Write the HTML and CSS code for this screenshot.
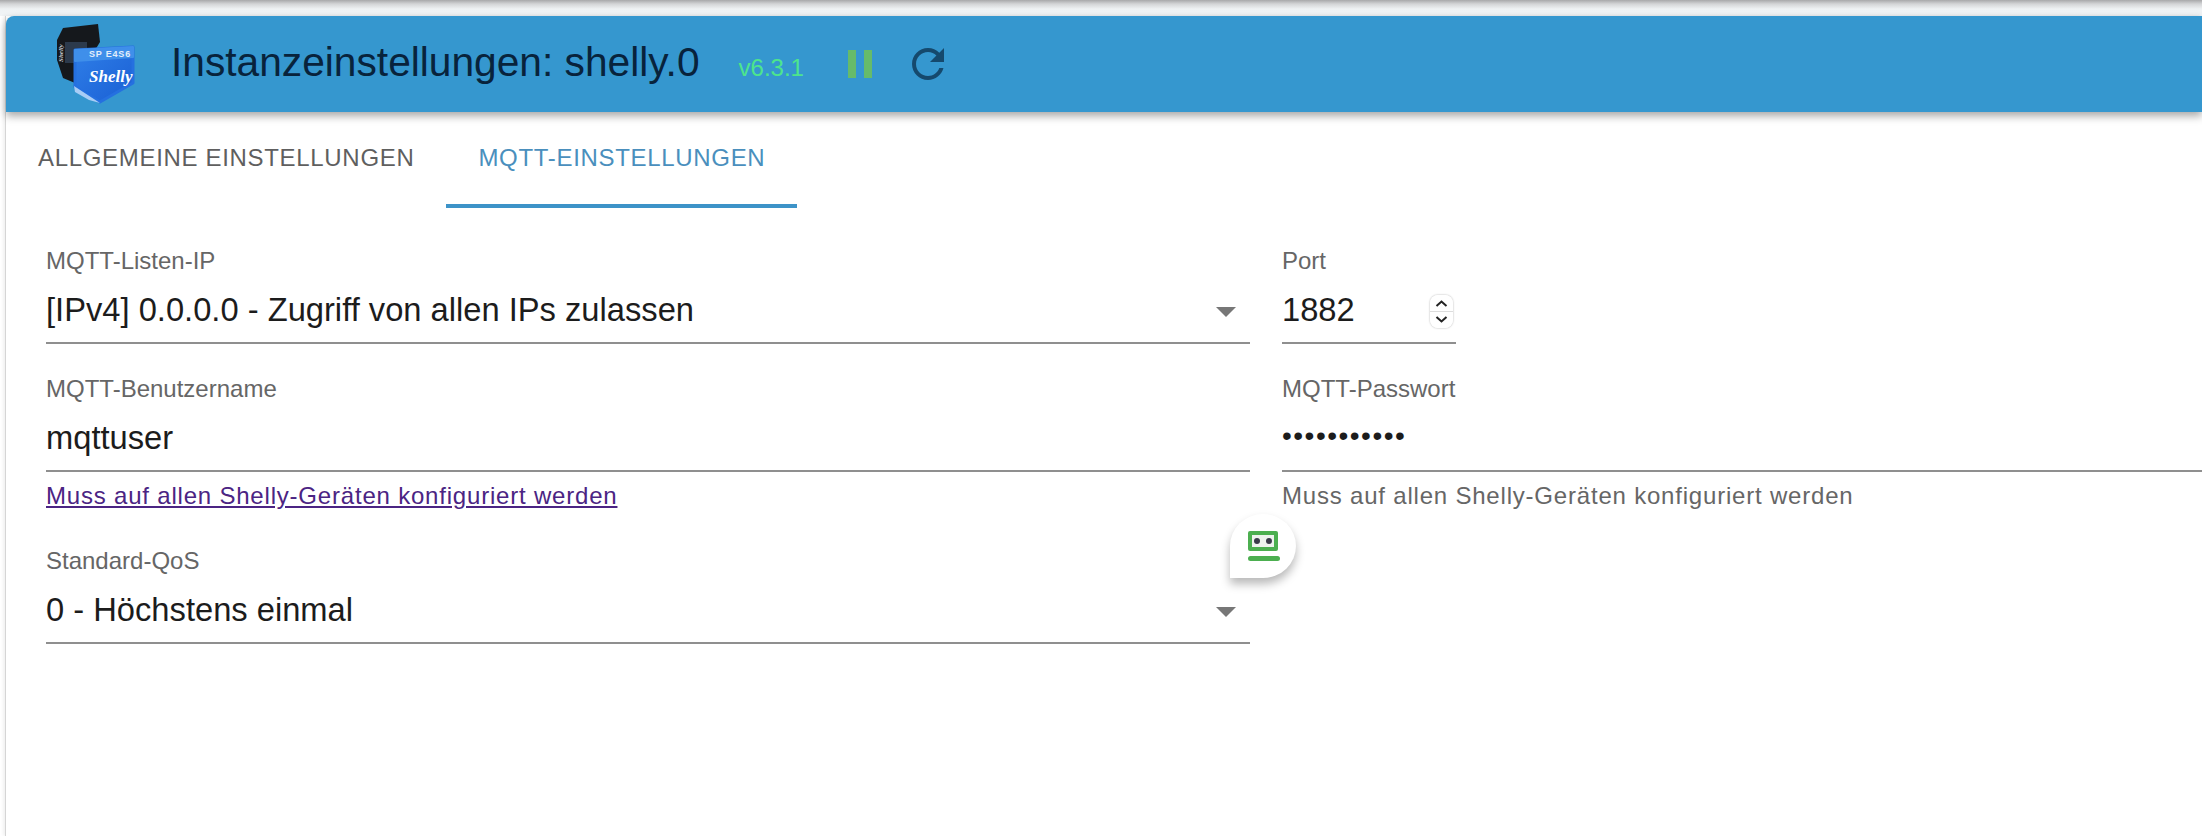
FILE: index.html
```html
<!DOCTYPE html>
<html lang="de">
<head>
    <meta charset="UTF-8">
    <meta name="viewport" content="width=device-width, initial-scale=1.0">
    <title>Instanzeinstellungen: shelly.0</title>
    <link rel="stylesheet" href="styles.css">
</head>
<body>
    <div class="top-strip"></div>
    <div class="card">
        <header class="app-bar">
            <svg class="logo" width="90" height="90" viewBox="0 0 90 90">
                <defs>
                    <linearGradient id="shellyFace" x1="0" y1="0" x2="1" y2="1">
                        <stop offset="0" stop-color="#2f7fe8"/>
                        <stop offset="1" stop-color="#1a5fd4"/>
                    </linearGradient>
                </defs>
                <path d="M6 20 L12 8 L47 4 L49 22 L24 63 L12 58 L6 40 Z" fill="#15181c"/>
                <rect x="14" y="22" width="22" height="21" fill="#2c3a4c"/>
                <text class="logo-side" transform="translate(12 42) rotate(-90)">Shelly</text>
                <path d="M24 30 L82 27 L82 63 L49 82 L24 67 Z" fill="url(#shellyFace)" stroke="#2570e0" stroke-width="3" stroke-linejoin="round"/>
                <path d="M24 30 L82 27 L82 37 L24 41 Z" fill="#3f8fea" stroke="#3f8fea" stroke-width="2" stroke-linejoin="round"/>
                <path d="M23 66 L49 83 L38 80 L24 72 Z" fill="#a9cdf6"/>
                <text class="logo-keys" x="38" y="37">SP E4S6</text>
                <text class="logo-name" x="38" y="62">Shelly</text>
            </svg>
            <h1 class="app-title">Instanzeinstellungen: shelly.0</h1>
            <span class="version">v6.3.1</span>
            <div class="pause"><span></span><span></span></div>
            <svg class="reload" width="48" height="48" viewBox="0 0 24 24">
                <path d="M17.65 6.35C16.2 4.9 14.21 4 12 4c-4.42 0-7.99 3.58-7.99 8s3.57 8 7.99 8c3.73 0 6.84-2.55 7.73-6h-2.08c-.82 2.33-3.04 4-5.65 4-3.31 0-6-2.69-6-6s2.69-6 6-6c1.66 0 3.14.69 4.22 1.78L13 11h7V4l-2.35 2.35z"/>
            </svg>
        </header>

        <nav class="tabs">
            <div class="tab">ALLGEMEINE EINSTELLUNGEN</div>
            <div class="tab tab-active">MQTT-EINSTELLUNGEN</div>
        </nav>

        <form class="form-grid">
            <div class="field">
                <label class="field-label">MQTT-Listen-IP</label>
                <div class="field-value">[IPv4] 0.0.0.0 - Zugriff von allen IPs zulassen<i class="arrow"></i></div>
            </div>
            <div class="field field-port">
                <label class="field-label">Port</label>
                <div class="field-value">1882
                    <div class="stepper">
                        <svg width="23" height="33" viewBox="0 0 23 33">
                            <path d="M6.5 11 L11.5 6.5 L16.5 11 M6.5 22 L11.5 26.5 L16.5 22" fill="none" stroke="#222" stroke-width="2"/>
                        </svg>
                    </div>
                </div>
            </div>

            <div class="field">
                <label class="field-label">MQTT-Benutzername</label>
                <div class="field-value">mqttuser</div>
                <a class="field-help help-link" href="#">Muss auf allen Shelly-Geräten konfiguriert werden</a>
            </div>
            <div class="field">
                <label class="field-label">MQTT-Passwort</label>
                <div class="field-value password">•••••••••••</div>
                <div class="field-help">Muss auf allen Shelly-Geräten konfiguriert werden</div>
            </div>

            <div class="field">
                <label class="field-label">Standard-QoS</label>
                <div class="field-value">0 - Höchstens einmal<i class="arrow"></i></div>
            </div>
        </form>
    </div>

    <div class="form-bubble">
        <svg width="34" height="34" viewBox="0 0 34 34">
            <rect x="2" y="2" width="30" height="20" rx="2" fill="#4caf50"/>
            <rect x="6" y="6" width="22" height="12" fill="#eef2ee"/>
            <circle cx="11" cy="12" r="3" fill="#3a3a4a"/>
            <circle cx="23" cy="12" r="3" fill="#3a3a4a"/>
            <rect x="2" y="27" width="32" height="5" rx="2.5" fill="#4caf50"/>
        </svg>
    </div>
</body>
</html>
```

FILE: styles.css
```css
body {
    margin: 0;
    height: 836px;
    overflow: hidden;
    background: #fff;
    font-family: 'Liberation Sans', Arial, sans-serif;
}

.top-strip {
    height: 16px;
    background: linear-gradient(#a8a8aa 0, #d4d5d7 4px, #eff2f4 9px, #f1f4f6 16px);
}

.card {
    margin-left: 5px;
    border-left: 1px solid #d5d5d5;
    box-shadow: -2px 0 3px rgba(0, 0, 0, 0.06);
    height: 820px;
    background: #fff;
}

.app-bar {
    position: relative;
    display: flex;
    align-items: center;
    height: 96px;
    background: #3597cf;
    border-top-left-radius: 8px;
    box-shadow: 0 4px 8px rgba(0, 0, 0, 0.35);
}

.logo {
    margin-left: 45px;
    margin-top: 2px;
    flex: none;
}

.logo-side {
    font: italic bold 7px 'Liberation Serif', serif;
    fill: #c8ccd2;
}

.logo-keys {
    font: bold 9px 'Liberation Sans', sans-serif;
    fill: #e3eefb;
    letter-spacing: 0.8px;
}

.logo-name {
    font: italic bold 17px 'Liberation Serif', serif;
    fill: #fff;
}

.app-title {
    margin: 0 0 3px 30px;
    font-size: 40.7px;
    font-weight: 400;
    color: #08233c;
}

.version {
    margin: 7px 0 0 39px;
    font-size: 24px;
    color: #4de58c;
}

.pause {
    display: flex;
    gap: 8px;
    margin-left: 44px;
}

.pause span {
    width: 8px;
    height: 28px;
    background: #66bb6a;
}

.reload {
    margin-left: 32px;
    fill: #15496d;
}

.tabs {
    display: flex;
    height: 96px;
}

.tab {
    padding: 0 32px;
    height: 92px;
    line-height: 92px;
    font-size: 24px;
    letter-spacing: 0.68px;
    color: #5f5f5f;
}

.tab-active {
    color: #4a8fbd;
    border-bottom: 4px solid #3d93c8;
}

.form-grid {
    display: grid;
    grid-template-columns: 1204px 1fr;
    column-gap: 32px;
    padding: 39px 0 0 40px;
}

.field {
    padding-bottom: 31px;
}

.field-label {
    display: block;
    height: 28px;
    line-height: 28px;
    font-size: 24px;
    color: #666;
}

.field-value {
    position: relative;
    display: flex;
    align-items: center;
    height: 65px;
    padding-top: 2px;
    border-bottom: 2px solid #8f8f8f;
    font-size: 32.7px;
    color: #1c1c1c;
}

.field-port {
    width: 174px;
}

.password {
    height: 62px;
    padding-bottom: 3px;
    font-size: 28px;
    letter-spacing: 1.5px;
}

.arrow {
    position: absolute;
    right: 14px;
    top: 32px;
    border-left: 10px solid transparent;
    border-right: 10px solid transparent;
    border-top: 10px solid #777;
}

.stepper {
    position: absolute;
    right: 3px;
    top: 20px;
    width: 23px;
    height: 33px;
    border-radius: 8px;
    box-shadow: 0 0 2px rgba(0, 0, 0, 0.35);
    background: linear-gradient(#fff 48%, #ddd 48%, #ddd 53%, #fff 53%);
}

.stepper svg {
    display: block;
}

.field-help {
    display: block;
    margin: 10px 0 6px;
    font-size: 24px;
    line-height: 28px;
    letter-spacing: 0.8px;
    color: #666;
}

.help-link {
    color: #4b2483;
}

.form-bubble {
    position: absolute;
    left: 1230px;
    top: 514px;
    width: 66px;
    height: 64px;
    display: flex;
    align-items: center;
    justify-content: center;
    background: #fff;
    border-radius: 50% 50% 50% 0;
    box-shadow: 0 6px 10px rgba(0, 0, 0, 0.28);
}
```
